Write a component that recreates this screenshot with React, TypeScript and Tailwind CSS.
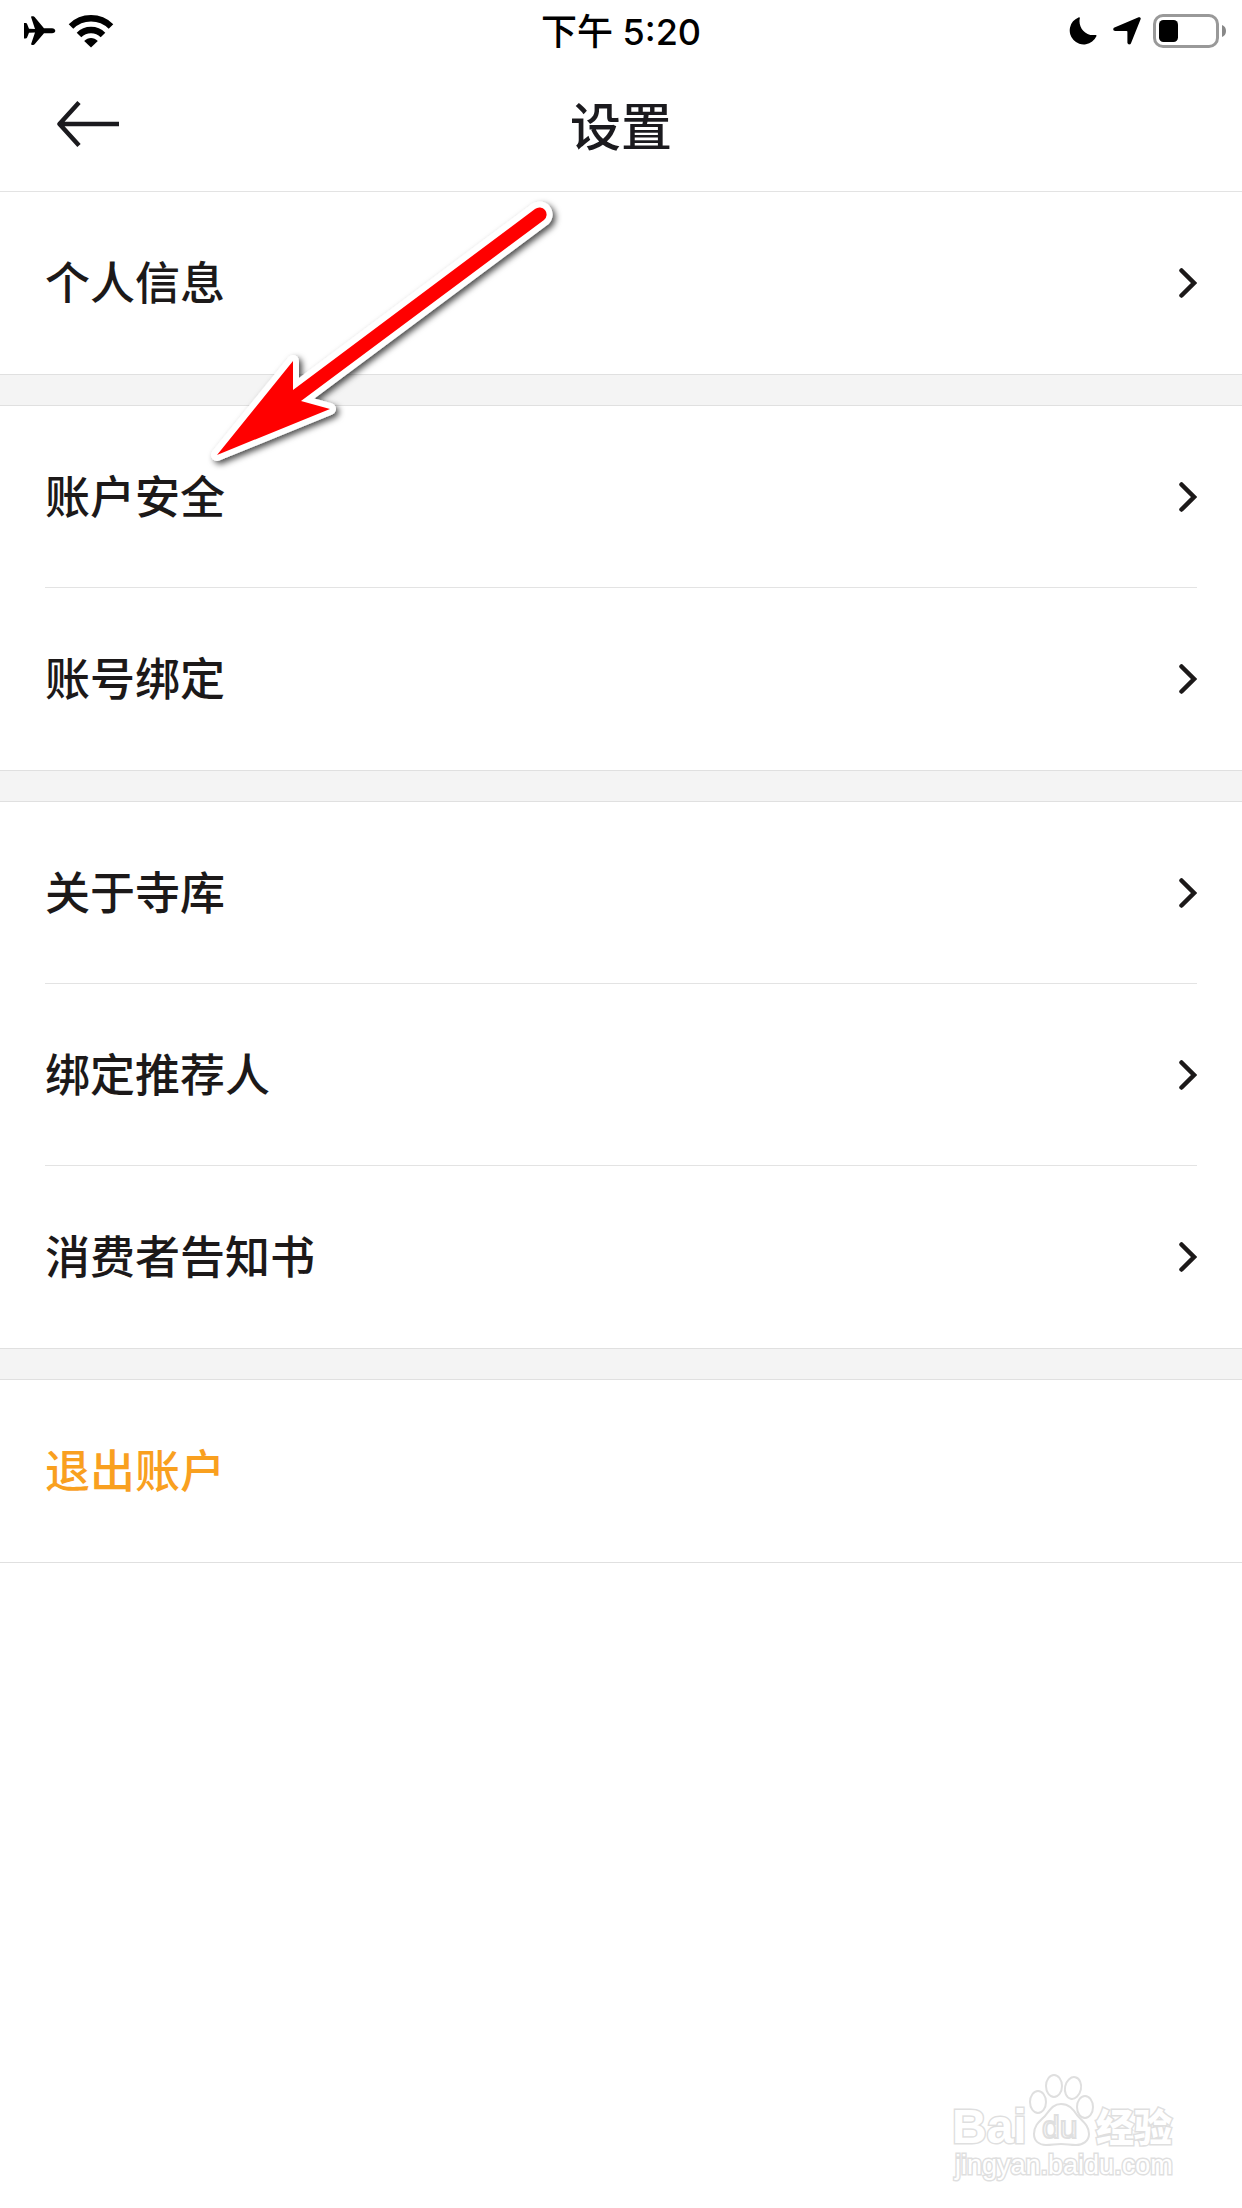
import type { ReactNode } from 'react';

type Item = {
  label: string;
  accent?: boolean;
};

const sections: Item[][] = [
  [{ label: '个人信息' }],
  [{ label: '账户安全' }, { label: '账号绑定' }],
  [{ label: '关于寺库' }, { label: '绑定推荐人' }, { label: '消费者告知书' }],
  [{ label: '退出账户', accent: true }],
];

function PlaneIcon() {
  return (
    <svg width="32" height="30" viewBox="0 0 32 30" fill="#000" aria-hidden="true">
      <path d="M0 7h1.6c.8 0 1.200.4 1.600 1.200L5 12.800l6 .2L7.200 1.500C7 .6 7.300.2 8 .2h1.200c.6 0 1 .3 1.400.8L20 12.200h8c2 0 3.300 1.300 3.300 2.600S30 17.300 28 17.300h-8L10.600 28.200c-.4.500-.8.700-1.400.700H8c-.7 0-1-.5-.8-1.200L11 16.500l-6 .2-1.800 4.500c-.4.800-.8 1.200-1.600 1.200H0z" />
    </svg>
  );
}

function WifiIcon() {
  return (
    <svg width="46" height="34" viewBox="0 0 46 34" fill="none" stroke="#000" aria-hidden="true">
      <path d="M3 12.500a28.500 28.500 0 0 1 40 0" strokeWidth="6.500" />
      <path d="M11 21a17 17 0 0 1 24 0" strokeWidth="6.500" />
      <path d="M23 33.500 16.200 27c2-2 4.300-3 6.800-3s4.800 1 6.800 3z" fill="#000" stroke="none" />
    </svg>
  );
}

function MoonIcon() {
  return (
    <svg className="mr-1" width="28" height="28" viewBox="0 0 28 28" fill="#000" aria-hidden="true">
      <path d="M9.500.400c.9-.5 1.600 0 1.300 1C9 9.500 15.500 19.200 26.200 18c1.200-.2 1.600.3 1.200 1.300A14 14 0 1 1 9.500.4z" />
    </svg>
  );
}

function LocationIcon() {
  return (
    <svg width="28" height="28" viewBox="0 0 28 28" fill="#000" aria-hidden="true">
      <path d="M25.600.300c1.400-.6 2.500.5 2 1.900L18 26.200c-.7 1.800-3.600 1.500-3.600-.6V14.800c0-.5-.3-.8-.8-.8H2.300C0 14-.500 11.500 1.500 10.600z" />
    </svg>
  );
}

function BatteryIcon() {
  return (
    <svg width="73" height="34" viewBox="0 0 73 34" aria-hidden="true">
      <rect x="1.500" y="1.500" width="63" height="31" rx="8.500" fill="none" stroke="#999" strokeWidth="3" />
      <rect x="6" y="6" width="19" height="22" rx="4.500" fill="#000" />
      <path d="M69 11c2.600.8 4 3.200 4 6s-1.400 5.200-4 6z" fill="#888" />
    </svg>
  );
}

function StatusBar() {
  return (
    <div className="grid h-[60px] grid-cols-3 items-center px-4">
      <div className="flex items-center gap-3 pl-2">
        <PlaneIcon />
        <WifiIcon />
      </div>
      <p className="pt-0.5 text-center font-['Inter','Noto_Sans_CJK_SC',sans-serif] text-[36px] font-medium leading-[60px] text-black">
        下午 5:20
      </p>
      <div className="flex items-center justify-end gap-3">
        <MoonIcon />
        <LocationIcon />
        <BatteryIcon />
      </div>
    </div>
  );
}

function Header() {
  return (
    <header className="grid h-[132px] grid-cols-3 items-center border-b border-[#e3e3e3] px-[45px] pb-1">
      <button type="button" aria-label="返回" className="justify-self-start p-3">
        <svg width="62" height="46" viewBox="0 0 62 46" fill="none" stroke="#1b1a1e" strokeWidth="4.500" aria-hidden="true">
          <path d="M62 23H3M22 1.500 2.500 23l19.500 21.500" strokeLinejoin="round" />
        </svg>
      </button>
      <h1 className="text-center text-[51px] font-medium leading-[60px] text-[#1b1a1e]">设置</h1>
    </header>
  );
}

function Row({ item, last }: { item: Item; last: boolean }) {
  return (
    <li>
      <button
        type="button"
        className={`flex h-[182px] w-full items-center justify-between text-left text-[45px] font-medium leading-[60px] ${
          last ? '' : 'border-b border-[#e3e3e3]'
        } ${item.accent ? 'text-[#f9a01f]' : 'text-[#1c1919]'}`}
      >
        <span className="pb-1">{item.label}</span>
        {!item.accent && (
          <svg width="18" height="30" viewBox="0 0 18 30" fill="none" stroke="#1c1919" strokeWidth="4.500" aria-hidden="true">
            <path d="M2.500 2.500 15 15 2.500 27.500" strokeLinecap="round" />
          </svg>
        )}
      </button>
    </li>
  );
}

function Section({ children }: { children: ReactNode }) {
  return (
    <ul className="border-y border-[#e0e0e0] bg-white px-[45px] first:border-t-0">{children}</ul>
  );
}

function PointerArrow() {
  const shape = 'M217 455 293 361V390L535 209A7 7 0 0 1 544 220L301 401 330 409z';
  return (
    <svg
      className="pointer-events-none absolute left-[200px] top-[190px]"
      width="370"
      height="290"
      viewBox="200 190 370 290"
      aria-hidden="true"
    >
      <defs>
        <filter id="arrow-shadow" x="-10%" y="-10%" width="120%" height="120%">
          <feDropShadow dx="3" dy="3" stdDeviation="3" floodColor="#000" floodOpacity="0.7" />
        </filter>
      </defs>
      <path d={shape} fill="#fff" stroke="#fff" strokeWidth="12" strokeLinejoin="round" filter="url(#arrow-shadow)" />
      <path d={shape} fill="#f00" />
    </svg>
  );
}

function Watermark() {
  return (
    <svg
      className="absolute bottom-4 right-[42px]"
      width="250"
      height="122"
      viewBox="950 2070 250 122"
      fill="#fff"
      stroke="#dfdfdf"
      strokeWidth="2"
      role="img"
      aria-label="Baidu 经验"
    >
      <g paintOrder="stroke" strokeWidth="3" fontFamily="'Liberation Sans', 'Noto Sans CJK SC', sans-serif">
        <text x="952" y="2143" fontSize="48" fontWeight="700">Bai</text>
        <text x="1096" y="2141" fontSize="38" fontWeight="900">经验</text>
        <text x="955" y="2174" fontSize="27">jingyan.baidu.com</text>
      </g>
      <ellipse cx="1038" cy="2102" rx="8" ry="11" />
      <ellipse cx="1054" cy="2086" rx="8" ry="11" />
      <ellipse cx="1073" cy="2088" rx="8" ry="11" transform="rotate(12 1073 2088)" />
      <ellipse cx="1085" cy="2107" rx="8" ry="11" />
      <path d="M1061 2104c8 0 12 5 16 11 5 6 12 10 12 19 0 7-6 11-13 11-6 0-9-1-15-1s-9 1-15 1c-7 0-12-4-12-11 0-9 6-13 11-18 5-6 8-12 16-12z" />
      <text x="1042" y="2138" fontSize="32" fontFamily="'Liberation Sans', sans-serif">du</text>
    </svg>
  );
}

export default function App() {
  return (
    <div className="relative flex min-h-screen flex-col bg-white font-['Noto_Sans_CJK_SC',sans-serif]">
      <StatusBar />
      <Header />
      <main className="flex flex-col gap-[30px] bg-[#f4f4f4]">
        {sections.map((items) => (
          <Section key={items[0].label}>
            {items.map((item, i) => (
              <Row key={item.label} item={item} last={i === items.length - 1} />
            ))}
          </Section>
        ))}
      </main>
      <PointerArrow />
      <Watermark />
    </div>
  );
}
